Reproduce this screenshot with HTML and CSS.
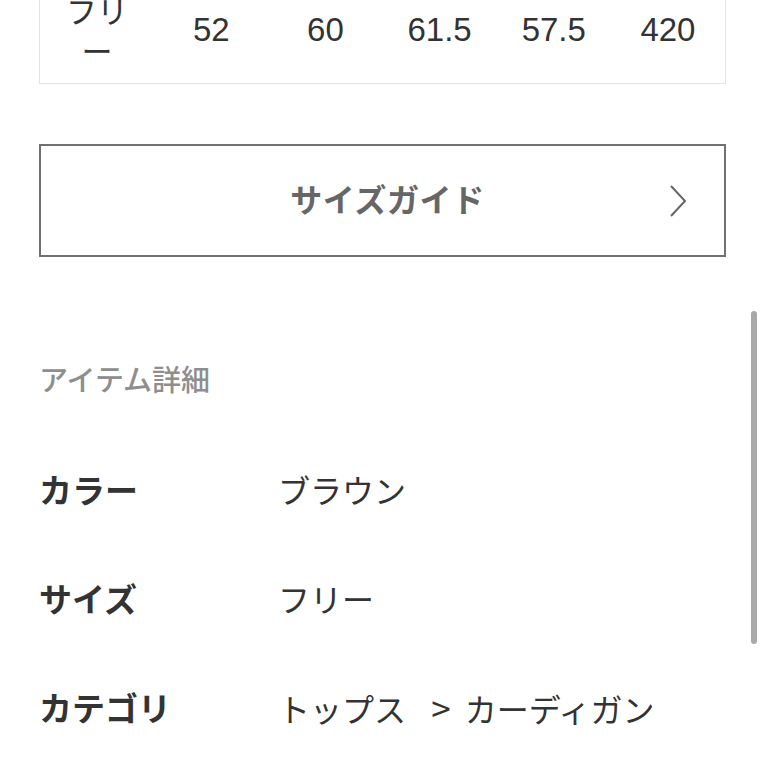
FILE: index.html
```html
<!DOCTYPE html>
<html lang="ja">
<head>
<meta charset="utf-8">
<title>アイテム詳細</title>
<link rel="stylesheet" href="styles.css">
</head>
<body>
<div class="page">
  <div class="size-table">
    <div class="cell cell-name">フリー</div>
    <div class="cell">52</div>
    <div class="cell">60</div>
    <div class="cell">61.5</div>
    <div class="cell">57.5</div>
    <div class="cell">420</div>
  </div>

  <a class="guide-btn" href="#">
    <span class="guide-label">サイズガイド</span>
    <svg class="chevron" width="18" height="32" viewBox="0 0 18 32" aria-hidden="true">
      <polyline points="2,1 16,16 2,31" fill="none" stroke="#666" stroke-width="2"/>
    </svg>
  </a>

  <h2 class="section-title">アイテム詳細</h2>

  <dl class="details">
    <div class="detail-row"><dt>カラー</dt><dd>ブラウン</dd></div>
    <div class="detail-row"><dt>サイズ</dt><dd>フリー</dd></div>
    <div class="detail-row"><dt>カテゴリ</dt><dd>トップス <span class="sep">&gt;</span> カーディガン</dd></div>
  </dl>
</div>
<div class="scrollbar"></div>
</body>
</html>
```

FILE: styles.css
```css
html, body {
  margin: 0;
  padding: 0;
  background: #fff;
  overflow: hidden;
}
body {
  font-family: "Noto Sans CJK JP", sans-serif;
  color: #333;
}
.page {
  padding: 0 40px 0 39px;
}
.size-table {
  margin-top: -27px;
  display: grid;
  grid-template-columns: repeat(6, 1fr);
  border: 1px solid #e3e3e3;
  padding: 16px 0 13px;
}
.cell {
  display: flex;
  align-items: center;
  justify-content: center;
  text-align: center;
  padding: 0 12px;
  font-family: "Liberation Sans", "Noto Sans CJK JP", sans-serif;
  font-size: 33px;
  line-height: 40px;
  color: #333;
}
.cell-name {
  line-break: anywhere;
  font-family: "Noto Sans CJK JP", sans-serif;
  font-size: 31px;
}
.guide-btn {
  margin-top: 60px;
  height: 109px;
  border: 2px solid #707070;
  display: grid;
  grid-template-columns: 1fr auto 1fr;
  align-items: center;
  padding: 0 37px;
  text-decoration: none;
}
.guide-label {
  grid-column: 2;
  font-size: 32px;
  font-weight: 700;
  letter-spacing: 0.6px;
  color: #666;
  padding: 0 0 6px 10px;
}
.chevron {
  grid-column: 3;
  justify-self: end;
}
.section-title {
  margin: 101px 0 36px;
  font-size: 29px;
  line-height: 40px;
  font-weight: 500;
  color: #8e8e8e;
}
.details {
  margin: 0;
}
.detail-row {
  display: grid;
  grid-template-columns: 239px 1fr;
  align-items: center;
  height: 109px;
}
.detail-row dt {
  font-size: 33px;
  font-weight: 700;
  color: #333;
}
.detail-row dd {
  margin: 0;
  font-size: 32px;
  font-weight: 400;
  color: #333;
}
.sep {
  font-size: 35px;
  margin: 0 7px 0 18px;
}
.scrollbar {
  position: absolute;
  left: 751px;
  top: 311px;
  width: 6px;
  height: 333px;
  border-radius: 3px;
  background: #a9a9a9;
}
```
